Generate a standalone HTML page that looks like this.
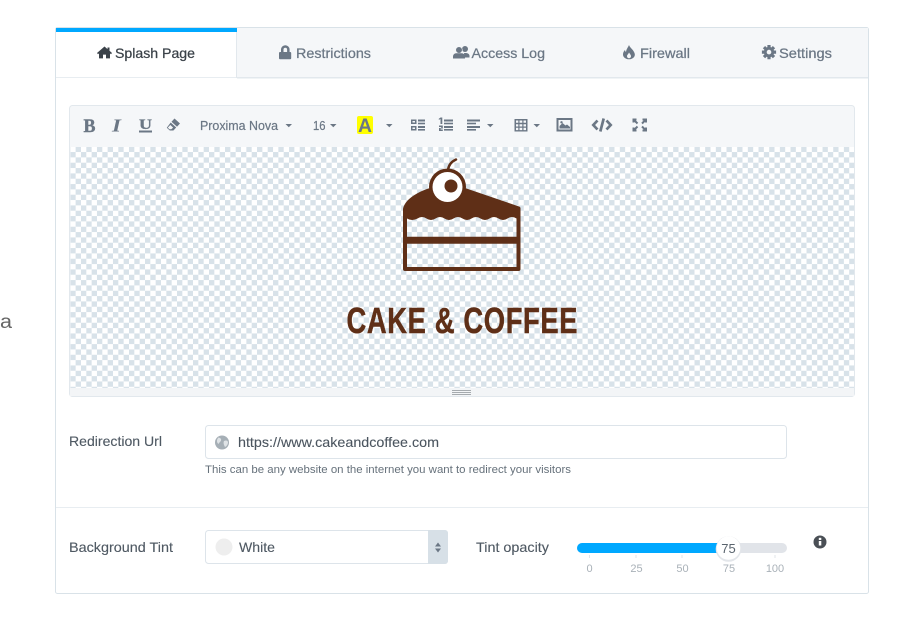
<!DOCTYPE html>
<html lang="en">
<head>
<meta charset="utf-8">
<title>Splash Page</title>
<style>
html,body{margin:0;padding:0;background:#fff;width:900px;height:634px;overflow:hidden}
svg{display:block;filter:blur(.3px)}
text{font-family:"Liberation Sans",sans-serif}
.tab{font-size:14px;fill:#6b7785;stroke:#6b7785;stroke-width:.25px}
.lab{font-size:14px;fill:#4f5963;stroke:#4f5963;stroke-width:.12px}
.tick{font-size:11px;fill:#a9b1b8;text-anchor:middle}
.ic{fill:#6b7785}
</style>
</head>
<body>
<svg width="900" height="634" viewBox="0 0 900 634" xmlns="http://www.w3.org/2000/svg">
<defs>
<pattern id="chk" x="70.300" y="146.700" width="10.670" height="10.670" patternUnits="userSpaceOnUse">
<rect width="10.670" height="10.670" fill="#fff"/>
<rect x="5.335" width="5.335" height="5.335" fill="#d8e2e9"/>
<rect y="5.335" width="5.335" height="5.335" fill="#d8e2e9"/>
</pattern>
</defs>
<rect width="900" height="634" fill="#fff"/>
<text x="0" y="328" font-size="19" fill="#666" textLength="12" lengthAdjust="spacingAndGlyphs">a</text>

<!-- panel -->
<rect x="55.500" y="27.500" width="813" height="566" rx="2" fill="#fff" stroke="#d9e2e8"/>
<rect x="237" y="28" width="631" height="49" fill="#f5f7f9"/>
<rect x="237" y="77" width="631" height="1.500" fill="#e2e8ed"/>
<rect x="56" y="77" width="181" height="1" fill="#e8edf1"/>
<rect x="236" y="31" width="1" height="47" fill="#e2e8ed"/>
<rect x="56" y="28" width="181" height="4" fill="#00a8ff"/>

<!-- tabs -->
<path d="M104.500 46.500l-7.500 6.500 1 1.200 1-.8v5h4v-3.800h3v3.800h4v-5l1 .8 1-1.200-2.500-2.200v-3.300h-2v1.600z" fill="#3b4249"/>
<text x="115" y="58" font-size="14" fill="#3b4249" stroke="#3b4249" stroke-width=".25" textLength="80" lengthAdjust="spacingAndGlyphs">Splash Page</text>

<path d="M281 52v-2.500a4.300 4.300 0 0 1 8.600 0V52h.6a1 1 0 0 1 1 1v5.300a1 1 0 0 1-1 1h-10.200a1 1 0 0 1-1-1V53a1 1 0 0 1 1-1zm2.500 0h3.600v-2.500a1.800 1.800 0 0 0-3.600 0z" class="ic" fill-rule="evenodd"/>
<text x="296" y="58" class="tab" textLength="75" lengthAdjust="spacingAndGlyphs">Restrictions</text>

<circle cx="465" cy="49" r="3" class="ic"/>
<path d="M464 53h1.500c2.200 0 4 1 4 3v1.500h-5z" class="ic"/>
<circle cx="459" cy="50" r="3.300" class="ic" stroke="#f5f7f9" stroke-width=".6"/>
<path d="M453 58.500v-2c0-2 1.500-3.300 3.500-3.300h5c2 0 3.500 1.300 3.500 3.300v2z" class="ic"/>
<text x="471.500" y="58" class="tab" textLength="73.500" lengthAdjust="spacingAndGlyphs">Access Log</text>

<path d="M629 45c1 3 5 5 5.800 9 .4 3-2.300 5.300-5.800 5.300s-6.300-2.300-6-5.300c.2-2 1.300-3.200 2-4 .2 1 .5 1.500 1 2 .3-3 2-4.500 3-7z" class="ic"/>
<path d="M629 52.500c.8 1.500 2 2.200 2 3.800 0 1.200-1 2-2 2s-2-.8-2-2c0-1.500 1.500-2.300 2-3.800z" fill="#f5f7f9"/>
<text x="640" y="58" class="tab" textLength="50" lengthAdjust="spacingAndGlyphs">Firewall</text>

<path d="M767.400 45h3.200v14.200h-3.200zM761.900 50.500h14.200v3.200h-14.200z" class="ic"/>
<path d="M767.400 45h3.200v14.200h-3.200zM761.900 50.500h14.200v3.200h-14.200z" class="ic" transform="rotate(45 769 52.100)"/>
<circle cx="769" cy="52.100" r="5.200" class="ic"/>
<circle cx="769" cy="52.100" r="2.300" fill="#f5f7f9"/>
<text x="779" y="58" class="tab" textLength="53" lengthAdjust="spacingAndGlyphs">Settings</text>

<!-- editor frame -->
<rect x="69.500" y="105.500" width="785" height="291" rx="3" fill="#f5f7f9" stroke="#e2e8ed"/>
<rect x="70" y="147" width="784" height="241" fill="url(#chk)"/>
<rect x="70" y="388" width="784" height="8" fill="#f3f5f7"/>
<path d="M452 390.500h19M452 392.500h19M452 394.500h19" stroke="#a6abaf" stroke-width="1"/>

<!-- toolbar -->
<text x="83.500" y="132" font-size="19" font-weight="700" fill="#6b7785" stroke="#6b7785" stroke-width=".4" style="font-family:'Liberation Serif',serif" textLength="12" lengthAdjust="spacingAndGlyphs">B</text>
<text x="112" y="131.500" font-size="18" font-style="italic" font-weight="700" fill="#6b7785" style="font-family:'Liberation Serif',serif" textLength="9" lengthAdjust="spacingAndGlyphs">I</text>
<text x="139" y="129" font-size="15" font-weight="700" fill="#6b7785" stroke="#6b7785" stroke-width=".3" style="font-family:'Liberation Serif',serif" textLength="13" lengthAdjust="spacingAndGlyphs">U</text>
<rect x="139" y="130.500" width="13" height="2" fill="#6b7785"/>
<path d="M174.500 118.500l5.500 5-3 3.200-5.500-5z" class="ic"/>
<path d="M170.700 122.500l5.500 5-2.800 3h-3.600l-3-2.800z" class="ic"/>
<path d="M170.300 125l2.800 2.600-1.800 1.700h-1.800l-1.700-1.700z" fill="#f5f7f9"/>

<text x="200" y="130" font-size="12.500" fill="#6b7785" stroke="#6b7785" stroke-width=".2" textLength="78" lengthAdjust="spacingAndGlyphs">Proxima Nova</text>
<path d="M285.500 124h6.500l-3.200 3.200z" class="ic"/>
<text x="313" y="130" font-size="13" fill="#6b7785" stroke="#6b7785" stroke-width=".2" textLength="12.500" lengthAdjust="spacingAndGlyphs">16</text>
<path d="M330 124h6.500l-3.200 3.200z" class="ic"/>
<rect x="357" y="116" width="16" height="18" rx="2" fill="#ffff00"/>
<text x="358" y="132" font-size="19" font-weight="700" fill="#6b7785" textLength="14" lengthAdjust="spacingAndGlyphs">A</text>
<path d="M386 124h6.500l-3.200 3.200z" class="ic"/>

<g class="ic">
<path d="M411 119.500h5.500v4.500h-5.500zM412.500 121v1.500h2.500v-1.500zM411 126h5.500v4.500h-5.500zM412.500 127.500v1.500h2.500v-1.500z" fill-rule="evenodd"/>
<rect x="418" y="119.500" width="7" height="2"/><rect x="418" y="122.700" width="7" height="1.600"/>
<rect x="418" y="126" width="7" height="2"/><rect x="418" y="129" width="7" height="1.600"/>
<rect x="444" y="119.500" width="9" height="2"/><rect x="444" y="122.700" width="9" height="1.600"/>
<rect x="444" y="126" width="9" height="2"/><rect x="444" y="129" width="9" height="1.600"/>
<path d="M440.500 119v5h1.800v-6.500h-1.800l-1.700 1.200v1.200zM439 125.500h3.800v3h-2.200v1h2.200v1.500h-3.800v-3h2.200v-1h-2.200z"/>
<rect x="467" y="119.500" width="13" height="2"/><rect x="467" y="122.700" width="9" height="1.600"/>
<rect x="467" y="126" width="13" height="2"/><rect x="467" y="129" width="9" height="1.600"/>
<path d="M487 124h6.500l-3.200 3.200z"/>
<path d="M514.500 119h13v12.500h-13zM516 120.500v2.300h2.300v-2.300zm3.500 0v2.300h2.800v-2.300zm4 0v2.300h2.500v-2.300zm-7.500 3.700v2.300h2.300v-2.300zm3.500 0v2.300h2.800v-2.300zm4 0v2.300h2.500v-2.300zm-7.500 3.600v2.300h2.300v-2.300zm3.500 0v2.300h2.800v-2.300zm4 0v2.300h2.500v-2.300z" fill-rule="evenodd"/>
<path d="M533.500 124h6.500l-3.200 3.200z"/>
<path d="M556.500 118h16v13.500h-16zM558.500 120v9.500h12v-9.500z" fill-rule="evenodd"/>
<path d="M559.500 128.500v-2.500l3-3 3 2.500 1.500-1 3 2.500v1.500z"/>
<circle cx="561.500" cy="122.300" r="1.200"/>
</g>
<path d="M597.500 120.500l-4.200 4.500 4.200 4.500M606.500 120.500l4.200 4.500-4.200 4.500M603.700 118.500l-3.400 13" fill="none" stroke="#6b7785" stroke-width="2.700"/>
<g fill="none" stroke="#6b7785" stroke-width="2">
<path d="M633.500 122.500v-3h3M642.500 119.500h3.500v3M633.500 127.500v3h3M646 127.500v3h-3.500"/>
<path d="M634.500 120.500l3 3M645 120.500l-3 3M634.500 129.500l3-3M645 129.500l-3-3"/>
</g>

<!-- cake -->
<g fill="#5f2f17">
<path fill-rule="evenodd" d="M405 271a2 2 0 0 1-2-2v-60c1-6 8-15 27-21h35l54 18.500c1 .3 1.500 1 1.500 2v60.500a2 2 0 0 1-2 2zM407 218.500v18.200h109.500v-18.200q-4.500-3-9 0q-4.500 3-9 0q-4.500-3-9 0q-4.500 3-9 0q-4.500-3-9 0q-4.500 3-9 0q-4.500-3-9 0q-4.500 3-9 0q-4.500-3-9 0q-4.500 3-9 0q-4.500-3-9 0q-5.500 3-10.500 0zM407 243.800v23.200h109.500v-23.200z"/>
<circle cx="447.500" cy="187" r="18.500"/>
</g>
<circle cx="447.500" cy="187" r="15" fill="#fff"/>
<circle cx="451" cy="186" r="6.500" fill="#5f2f17"/>
<path d="M448 170c.5-4 2.500-8 8-10.500" fill="none" stroke="#5f2f17" stroke-width="2.500" stroke-linecap="round"/>
<g transform="translate(346.500 333) scale(.76 1)">
<text x="0" y="0" font-size="36" font-weight="700" fill="#5f2f17" stroke="#5f2f17" stroke-width=".5" textLength="304" lengthAdjust="spacing">CAKE &amp; COFFEE</text>
</g>

<!-- url -->
<text x="69" y="446" class="lab" textLength="93" lengthAdjust="spacingAndGlyphs">Redirection Url</text>
<rect x="205.500" y="425.500" width="581" height="33" rx="3" fill="#fff" stroke="#dde4ea"/>
<circle cx="222" cy="442.500" r="7" fill="#a6afb6"/>
<path d="M218.500 437.500c2 .5 3 1.500 2.500 3s-2 2-2.500 3.500c-1.500-1-2.500-4 0-6.500zM224 441c2-1 3.500-.5 4 1 0 2-1 4-3 5-1-2-2-4-1-6z" fill="#dfe3e6"/>
<text x="238" y="447" font-size="14" fill="#4b555f" stroke="#4b555f" stroke-width=".1" textLength="201" lengthAdjust="spacingAndGlyphs">https://www.cakeandcoffee.com</text>
<text x="205" y="473" font-size="11" fill="#66717b" textLength="366" lengthAdjust="spacingAndGlyphs">This can be any website on the internet you want to redirect your visitors</text>
<rect x="56" y="507" width="812" height="1" fill="#e8edf1"/>

<!-- tint -->
<text x="69" y="552" class="lab" textLength="104" lengthAdjust="spacingAndGlyphs">Background Tint</text>
<rect x="205.500" y="530.500" width="242" height="33" rx="3" fill="#fff" stroke="#dde4ea"/>
<path d="M428 530h17a3 3 0 0 1 3 3v28a3 3 0 0 1-3 3h-17z" fill="#d7e0e7"/>
<path d="M438 542.500l3 4h-6zM438 552.500l3-4h-6z" fill="#6b7785"/>
<circle cx="224" cy="547" r="8.500" fill="#eee"/>
<text x="239" y="552" font-size="14" fill="#4f5963" stroke="#4f5963" stroke-width=".12" textLength="36" lengthAdjust="spacingAndGlyphs">White</text>
<text x="476" y="552" class="lab" textLength="73" lengthAdjust="spacingAndGlyphs">Tint opacity</text>

<!-- slider -->
<rect x="577" y="543" width="210" height="10" rx="5" fill="#e1e4e9"/>
<path d="M582 543h145v10h-145a5 5 0 0 1 0-10z" fill="#00a8ff"/>
<path d="M589.500 555v3M636 555v3M682 555v3M775 555v3" stroke="#e1e4e9"/>
<text x="589.500" y="572" class="tick">0</text>
<text x="636.500" y="572" class="tick">25</text>
<text x="682.500" y="572" class="tick">50</text>
<text x="729" y="572" class="tick">75</text>
<text x="775" y="572" class="tick">100</text>
<circle cx="728.500" cy="549" r="12.800" fill="#e3e6ea"/>
<circle cx="728.500" cy="548" r="11.800" fill="#fff"/>
<text x="728.500" y="553" font-size="13" fill="#59636d" text-anchor="middle">75</text>
<circle cx="820" cy="542" r="6.500" fill="#4a4f55"/>
<rect x="818.800" y="541" width="2.500" height="4.500" fill="#fff"/>
<rect x="818.800" y="537.800" width="2.500" height="2.200" fill="#fff"/>
</svg>
</body>
</html>
